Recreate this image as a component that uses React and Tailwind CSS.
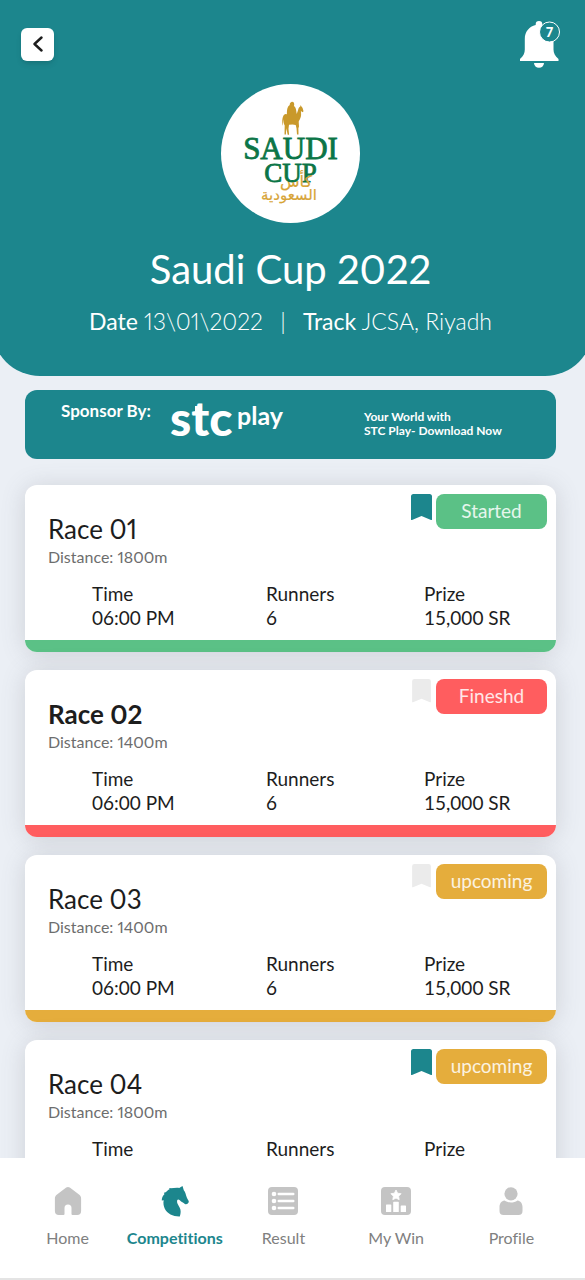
const races = [
  { name: 'Race 01', distance: '1800m', status: 'Started', tone: 'green', saved: true },
  { name: 'Race 02', distance: '1400m', status: 'Fineshd', tone: 'red', saved: false, strong: true },
  { name: 'Race 03', distance: '1400m', status: 'upcoming', tone: 'amber', saved: false },
  { name: 'Race 04', distance: '1800m', status: 'upcoming', tone: 'amber', saved: true },
];

const tones = {
  green: 'bg-[#5bc186]',
  red: 'bg-[#ff5d5f]',
  amber: 'bg-[#e5ad3c]',
};

function SaudiCupLogo() {
  return (
    <svg viewBox="0 0 139 139" className="size-[139px]" role="img" aria-label="Saudi Cup">
      <circle cx="69.5" cy="69.5" r="69.5" fill="#fff" />
      <path
        fill="#c9992b"
        d="M70.500 18c1.400-.5 2.500.4 2.700 1.900.1 1-.1 1.600-.3 2.100 1.400.8 2 2.300 2.300 4.500l.5 3.500 1.300-3.800c.5-1.900 1.200-3 2.300-3.600l.4-1.500.7 1.400c1.100.8 1.600 2.400 2.100 4.800l-.8 1-1.800-1.200c.3 2.800.4 5.200-.5 7-.4 1.500-1.400 2.400-1.700 3.700l.3 4.700-.6 1.700.1 6.200h-1.500l-.5-6.200-.8-3.200-3.200-.6-3.500.4-.5 3.900.6 6.100h-1.400l-1.400-6.600-.4 6.300H63.500l.2-8.900c-1-1.500-1.100-4-.9-6.400-.6 2-.6 4.600-1 6.600-1-3.900-.6-9.600 1.600-11.200 1-.7 1.700-.4 2.500-.7.1-3.500.1-7.200 2.900-8.900-.3-1.300.5-2.600 1.700-3z"
      />
      <g fill="#0b7547" stroke="#0b7547" strokeWidth=".8" fontFamily="'Liberation Serif', serif" textAnchor="middle">
        <text x="69.500" y="75" fontSize="31">SAUDI</text>
        <text x="69.500" y="98" fontSize="27">CUP</text>
      </g>
      <g fill="#d7a437" stroke="#d7a437" strokeWidth=".2" fontFamily="'DejaVu Sans', sans-serif" textAnchor="middle">
        <text x="75" y="103" fontSize="16">كأس</text>
        <text x="68" y="116" fontSize="15">السعودية</text>
      </g>
    </svg>
  );
}

function BellIcon() {
  return (
    <svg viewBox="0 0 41 48" className="h-12 w-[41px]" aria-hidden="true">
      <path
        fill="#fff"
        d="M20 1a3.300 3.300 0 0 1 3.300 3.300v.8C30 6.600 34.500 12 34.500 19v10.500c0 3.500 1.500 6.500 5 9.600V41H1v-1.900c3.500-3.100 4.800-6.100 4.800-9.600V19c0-7 4.200-12.400 10.900-13.900v-.8A3.300 3.300 0 0 1 20 1zM15 43h10a5 4.800 0 0 1-10 0z"
      />
      <circle cx="30.500" cy="12" r="10" fill="#1c868d" stroke="#fff" />
      <text x="30.500" y="16.500" fontSize="13" fontWeight="900" fill="#fff" textAnchor="middle" fontFamily="Lato, sans-serif">7</text>
    </svg>
  );
}

function Bookmark({ saved }) {
  return (
    <svg viewBox="0 0 21 28" className={saved ? 'h-7 w-[21px] text-[#1c868d]' : 'h-[25px] w-[19px] text-[#ebebeb]'} aria-hidden="true">
      <path fill="currentColor" d="M2.500 0h16A2.500 2.500 0 0 1 21 2.500v23c0 .5-.5.800-1 .5l-9.500-4L1 26c-.5.300-1 0-1-.5v-23A2.500 2.500 0 0 1 2.500 0z" />
    </svg>
  );
}

function RaceCard({ race }) {
  const tone = tones[race.tone];
  return (
    <li className="overflow-hidden rounded-xl bg-white shadow-[0_2px_24px_rgba(90,92,100,0.2)]">
      <div className="flex justify-between pr-[9px] pl-[23px]">
        <div className="pt-7">
          <h2 className={race.strong ? 'text-[26px] leading-8 font-bold' : 'text-[26px] leading-8'}>{race.name}</h2>
          <p className="text-base leading-6 text-[#6d6d6d]">Distance: {race.distance}</p>
        </div>
        <div className="flex items-start gap-1 pt-[9px]">
          <button type="button" aria-label={`Bookmark ${race.name}`} aria-pressed={race.saved} className="flex w-[21px] justify-center">
            <Bookmark saved={race.saved} />
          </button>
          <span className={`${tone} flex h-[35px] w-[111px] items-center justify-center rounded-lg text-[19px] text-white/85`}>
            {race.status}
          </span>
        </div>
      </div>
      <dl className="mt-[13px] grid grid-cols-[174fr_158fr_132fr] pb-2.5 pl-[67px] text-[19px] leading-6 tabular-nums">
        <div><dt>Time</dt><dd>06:00 PM</dd></div>
        <div><dt>Runners</dt><dd>6</dd></div>
        <div><dt>Prize</dt><dd>15,000 SR</dd></div>
      </dl>
      <div className={`${tone} h-3`} />
    </li>
  );
}

const navItems = [
  {
    label: 'Home',
    icon: (
      <path fillRule="evenodd" d="M13.200 1.600a3 3 0 0 1 3.600 0l9.500 7.200c1.200.9 1.800 2.200 1.800 3.700V25a4 4 0 0 1-4 4h-4.600a1 1 0 0 1-1-1v-6a3.500 3.500 0 0 0-7 0v6a1 1 0 0 1-1 1H5.900a4 4 0 0 1-4-4V12.500c0-1.500.6-2.800 1.800-3.700z" />
    ),
  },
  {
    label: 'Competitions',
    active: true,
    icon: (
      <path d="M22.500 0l1.300 4.300c1.700 2 2 4.600 3 7.100.8 2.200 2.500 3.500 1.900 4.900-.8 1.700-2.400 2.300-3.800 1.600-1.500-1.500-3.400-1.800-5.100-3.700-1.200-1.200-2.200-1-2.600.1-.8 2.400 1 4.700 2.400 7.200 1.500 2.700 1.300 5.500.2 9-6.600.2-12.500-2.700-15-7.700C3.700 20 3 17.300 3.700 14.200l-1.900.4c-.1-2.700.9-4.700 2.600-6.300L4 6.800C6.500 6.500 7.400 4 9.500 3.200l-.2-1.100c3.300.5 6.500-1 9.900-.2z" />
    ),
  },
  {
    label: 'Result',
    icon: (
      <>
        <rect y="1" width="30" height="28" rx="4" />
        <g fill="#fff">
          <circle cx="6" cy="8" r="2.300" />
          <circle cx="6" cy="15" r="2.300" />
          <circle cx="6" cy="22" r="2.300" />
          <rect x="9.500" y="6.800" width="17" height="2.400" rx="1.200" />
          <rect x="9.500" y="13.800" width="17" height="2.400" rx="1.200" />
          <rect x="9.500" y="20.800" width="17" height="2.400" rx="1.200" />
        </g>
      </>
    ),
  },
  {
    label: 'My Win',
    icon: (
      <>
        <rect y="1" width="30" height="28" rx="4" />
        <g fill="#fff">
          <path d="M15 4l1.600 3.200 3.500.5-2.500 2.500.6 3.500-3.200-1.600-3.200 1.600.6-3.500-2.500-2.500 3.500-.5z" stroke="#fff" strokeWidth=".8" strokeLinejoin="round" />
          <rect x="5" y="18.500" width="5.300" height="7.500" rx=".6" />
          <rect x="12.200" y="15.800" width="5.600" height="10.200" rx=".6" />
          <rect x="19.700" y="19.500" width="5.300" height="6.500" rx=".6" />
        </g>
      </>
    ),
  },
  {
    label: 'Profile',
    icon: (
      <>
        <circle cx="15" cy="7.800" r="6.600" />
        <path d="M8.500 14.500c4 2.700 9 2.700 13 0 3 .3 5 3.200 5 6.500v4a4 4 0 0 1-4 4h-15a4 4 0 0 1-4-4v-4c0-3.300 2-6.200 5-6.500z" />
      </>
    ),
  },
];

export default function App() {
  return (
    <div className="flex h-screen flex-col overflow-hidden bg-[#ebeff5] font-[Lato,sans-serif] text-[#1d1d1d] proportional-nums [font-variant-ligatures:none]">
      <header className="-mx-2 shrink-0 rounded-b-[48px] bg-[#1c868d] px-2 pt-5 pb-[41px] text-white">
        <div className="flex items-center justify-between pr-[25px] pl-[21px]">
          <button type="button" aria-label="Back" className="flex size-[33px] items-center justify-center rounded-md bg-white text-[#1d1d1d] shadow-md">
            <svg viewBox="0 0 10 16" className="h-4 w-2.5" fill="none" stroke="currentColor" strokeWidth="2.400" strokeLinecap="round" strokeLinejoin="round" aria-hidden="true">
              <path d="M8.500 1.500L1.500 8l7 6.500" />
            </svg>
          </button>
          <button type="button" aria-label="7 notifications">
            <BellIcon />
          </button>
        </div>
        <div className="mt-4 flex flex-col items-center pr-1">
          <SaudiCupLogo />
          <h1 className="mt-6 text-[40px] leading-11">Saudi Cup 2022</h1>
          <p className="mt-4 flex text-[23px] leading-7 font-light">
            <span><span className="font-normal">Date</span> 13\01\2022</span>
            <span className="w-10 text-center">|</span>
            <span><span className="font-normal">Track</span> JCSA, Riyadh</span>
          </p>
        </div>
      </header>

      <main className="min-h-0 flex-1 overflow-y-auto pt-3.5 pr-[29px] pb-6 pl-[25px] [scrollbar-width:none]">
        <a href="#sponsor" className="flex h-[69px] items-start rounded-xl bg-[#1c868d] pl-9 font-bold text-white">
          <span className="w-[109px] pt-[11px] text-[17px] leading-5">Sponsor By:</span>
          <svg viewBox="0 0 116 52" className="mt-2 h-[52px] w-[116px] overflow-visible" role="img" aria-label="stc play" fill="#fff" fontFamily="Lato, sans-serif">
            <text x="0" y="38" fontSize="48" fontWeight="900">stc</text>
            <rect x="25" y="8" width="7" height="7" />
            <text x="67" y="27" fontSize="25" fontWeight="700">play</text>
          </svg>
          <span className="ml-auto w-[192px] pt-5 text-xs leading-3.5">
            Your World with
            <br />
            STC Play- Download Now
          </span>
        </a>
        <ul className="mt-[26px] flex flex-col gap-[18px]">
          {races.map((race) => (
            <RaceCard key={race.name} race={race} />
          ))}
        </ul>
      </main>

      <nav className="relative grid h-[122px] shrink-0 grid-cols-[107fr_107fr_110fr_115fr_115fr] items-start border-b-2 border-[#e4e4e4] bg-white pt-7 pr-4 pl-3.5">
        {navItems.map((item) => (
          <a
            key={item.label}
            href={`#${item.label.toLowerCase().replace(' ', '-')}`}
            aria-current={item.active ? 'page' : undefined}
            className={`flex flex-col items-center gap-[11px] text-base leading-5 ${item.active ? 'font-bold text-[#1c868d]' : 'text-[#808080]'}`}
          >
            <svg viewBox="0 0 30 31" className={item.active ? 'h-[31px] w-[30px]' : 'h-[31px] w-[30px] text-[#c4c4c4]'} fill="currentColor" aria-hidden="true">
              {item.icon}
            </svg>
            {item.label}
          </a>
        ))}
      </nav>
    </div>
  );
}
